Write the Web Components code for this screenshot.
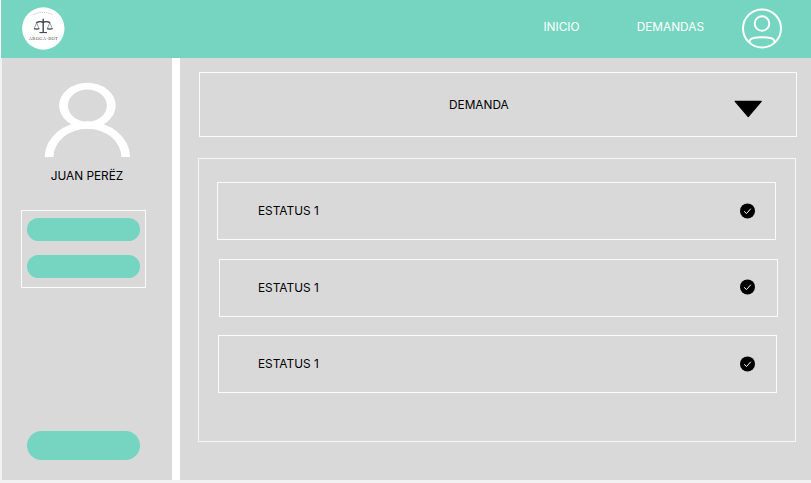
<!DOCTYPE html>
<html lang="es">
<head>
<meta charset="utf-8">
<title>Aboga-Bot</title>
<style>
html,body{margin:0;height:100%;overflow:hidden;background:#f2f2f2}
</style>
</head>
<body>
<aboga-app></aboga-app>
<script>
function define(name, html){
  const t=document.createElement('template');
  t.innerHTML=html;
  customElements.define(name, class extends HTMLElement{
    constructor(){
      super();
      this.attachShadow({mode:'open'}).appendChild(t.content.cloneNode(true));
    }
  });
}

define('brand-logo', `
<style>:host{display:block;width:44px;height:44px}svg{display:block}</style>
<svg width="44" height="44" viewBox="0 0 44 44">
  <circle cx="22.3" cy="22.5" r="21.2" fill="#fff"/>
  <path d="M12.3 8.7Q22 4.2 31.8 8.7" fill="none" stroke="#999" stroke-width="1" stroke-dasharray="1 1.2" opacity=".7"/>
  <g fill="none" stroke="#333a40" stroke-width="1">
    <path d="M22.2 12.8V26M15.5 16.6Q19 14.7 22.2 16.4Q25.4 14.7 29 16.6" stroke-width="1.3"/>
    <path d="M18.4 26.6H26"/>
    <path d="M15.6 16.6L13.3 22.6M15.6 16.6L18 22.6M28.8 16.6L26.4 22.6M28.8 16.6L31.2 22.6" stroke-width=".5"/>
    <path d="M13 22.7Q15.6 24.6 18.3 22.7ZM26.1 22.7Q28.8 24.6 31.5 22.7Z" stroke-width=".7"/>
  </g>
  <text x="7.8" y="33.6" textLength="29" font-family="Liberation Serif,serif" font-size="4.4" fill="#4a4248">ABOGA-BOT</text>
</svg>`);

define('user-badge', `
<style>:host{display:block;width:42px;height:42px}svg{display:block}</style>
<svg width="42" height="42" viewBox="0 0 42 42" fill="none" stroke="#fff" stroke-width="2">
  <circle cx="21" cy="21.4" r="19"/>
  <circle cx="21" cy="16.5" r="7.3"/>
  <path d="M8.7 35.6V33.8C9.2 29.1 32.8 29.1 33.3 33.8V35.6"/>
</svg>`);

define('app-header', `
<style>
:host{display:flex;box-sizing:border-box;height:58px;margin-left:1px;padding:6px 28px 0 20px;background:#76d5c0;
 font:11.85px Inter,sans-serif;color:#fff}
nav{display:flex;gap:57px;margin:14px 37px 0 auto;line-height:15px}
user-badge{margin-top:1px}
</style>
<brand-logo></brand-logo>
<nav><slot></slot></nav>
<user-badge></user-badge>`);

define('pill-button', `
<style>:host{display:block;box-sizing:border-box;width:112.6px;height:var(--h,23.2px);border-radius:var(--r,11.6px);background:#76d5c0}</style>`);

define('user-sidebar', `
<style>
:host{display:flex;flex-direction:column;box-sizing:border-box;width:170px;background:#d9d9d9;padding:24px 0 20px}
svg{display:block;margin-left:42px}
.name{width:170px;margin-top:12px;text-align:center;font:11.85px/15px Inter,sans-serif;color:#000}
.frame{display:flex;flex-direction:column;gap:13.4px;box-sizing:border-box;width:125px;height:78px;margin:26px 0 0 19px;padding:7px 0 0 5px;border:1px solid #fbfbfb}
.last{--h:29px;--r:14.5px;margin:auto 0 0 25.2px}
</style>
<svg width="87" height="75" viewBox="0 0 87 75" fill="#fff" fill-rule="evenodd">
  <path d="M15.1 23.6A28.3 22.8 0 0 1 71.7 23.6A28.3 22.8 0 0 1 15.1 23.6ZM23.9 23.6A19.5 16 0 0 0 62.9 23.6A19.5 16 0 0 0 23.9 23.6Z"/>
  <path d="M.7 75A42.7 35.4 0 0 1 86.1 75H77.3A33.9 28.2 0 0 0 9.5 75Z"/>
</svg>
<div class="name"><slot></slot></div>
<div class="frame"><pill-button></pill-button><pill-button></pill-button></div>
<pill-button class="last"></pill-button>`);

define('case-header', `
<style>
:host{display:flex;box-sizing:border-box;width:598px;height:65px;margin-left:19px;border:1px solid #fbfbfb;padding:25px 33px 0 249px;justify-content:space-between;font:11.85px/15px Inter,sans-serif;color:#000}
svg{display:block;margin-top:2px}
</style>
<span><slot></slot></span>
<svg width="30" height="19" viewBox="0 0 30 19"><path d="M2.2 1.3H28.2L15.2 16.6Z" stroke="#000" stroke-width="1.2" stroke-linejoin="round"/></svg>`);

define('status-row', `
<style>
:host{display:flex;box-sizing:border-box;width:559px;height:58px;border:1px solid #fbfbfb;align-items:center;justify-content:space-between;
 padding:0 calc(20px + var(--s,0px)) 1px calc(40px - var(--s,0px));margin-left:calc(18px + var(--s,0px));font:11.85px/15px Inter,sans-serif;color:#000}
svg{display:block}
span{padding-top:2px}
</style>
<span><slot></slot></span>
<svg width="16" height="16" viewBox="0 0 16 16"><circle cx="8.5" cy="7.9" r="7.5"/><path d="M5.1 8.3L7.5 10.5L11.8 5.7" fill="none" stroke="#fff" stroke-width="1"/></svg>`);

define('status-panel', `
<style>
:host{display:flex;flex-direction:column;gap:18.5px;box-sizing:border-box;width:598px;height:284px;margin:21px 0 0 18px;border:1px solid #f6f6f6;padding-top:23px}
</style><slot></slot>`);

define('aboga-app', `
<style>
:host{display:block;height:480px;background:#fff}
.body{display:flex;gap:8px;height:422px;box-sizing:border-box;padding-left:2px;background:linear-gradient(90deg,#f2f2f2 2px,#fff 2px)}
main{flex:1;background:#d9d9d9;padding-top:14px}
</style>
<app-header><span>INICIO</span><span>DEMANDAS</span></app-header>
<div class="body">
  <user-sidebar>JUAN PERËZ</user-sidebar>
  <main>
    <case-header>DEMANDA</case-header>
    <status-panel>
      <status-row>ESTATUS 1</status-row>
      <status-row style="--s:2px">ESTATUS 1</status-row>
      <status-row style="--s:1px">ESTATUS 1</status-row>
    </status-panel>
  </main>
</div>`);
</script>
</body>
</html>
